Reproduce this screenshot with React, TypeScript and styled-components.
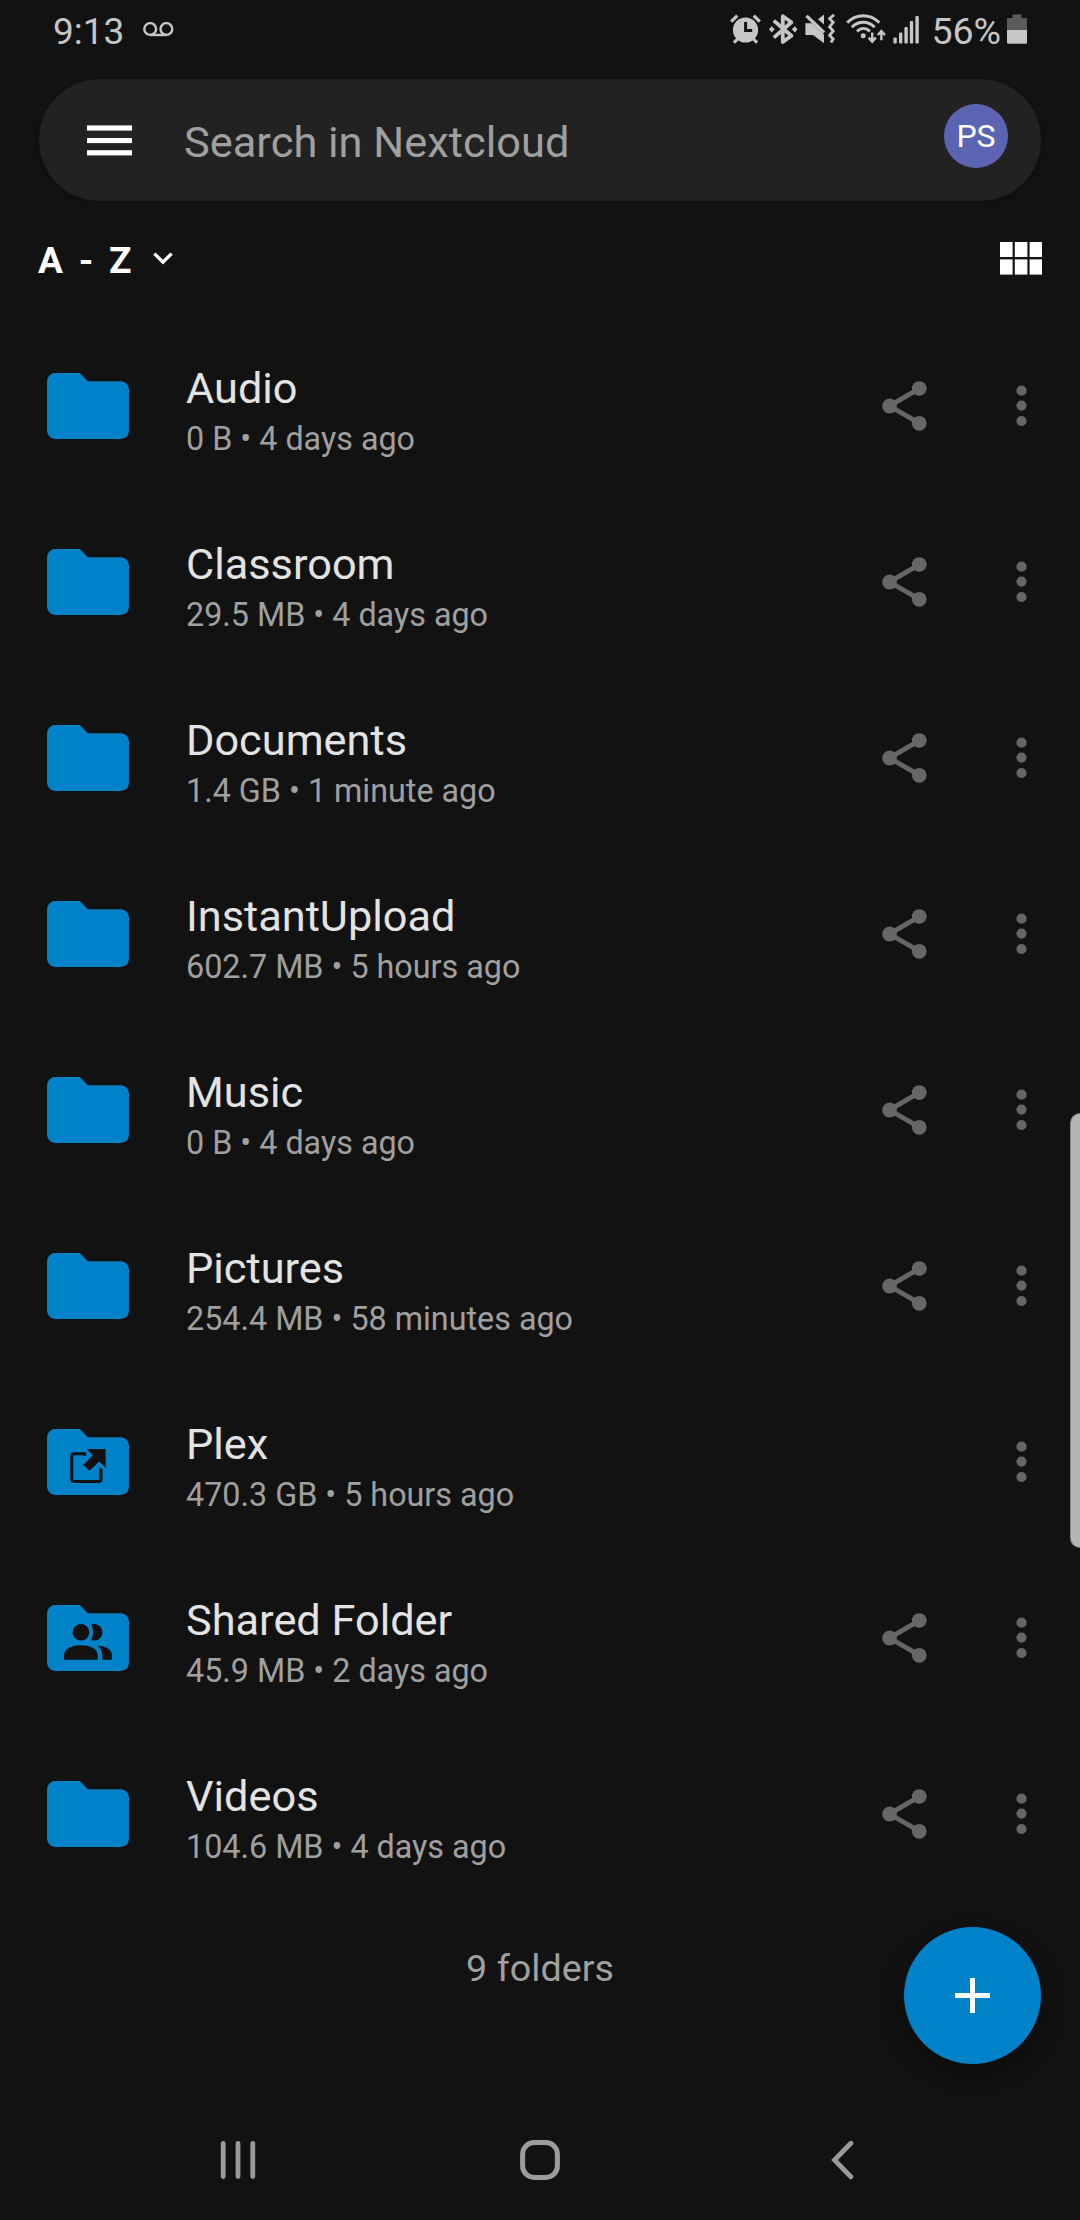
import React from "react";
import styled, { createGlobalStyle } from "styled-components";

const BG = "#121212";
const BLUE = "#0082c9";
const STATUS = "#c6c6c6";

const GlobalStyle = createGlobalStyle`
  * { box-sizing: border-box; }
  html, body { margin: 0; padding: 0; background: ${BG}; }
  svg { display: block; flex: none; }
  button { border: 0; padding: 0; background: none; font: inherit; color: inherit; }
`;

const Screen = styled.div`
  position: relative;
  display: flex;
  flex-direction: column;
  width: 1080px;
  height: 2220px;
  overflow: hidden;
  background: ${BG};
  font-family: Roboto, "Noto Sans", sans-serif;
`;

const StatusBar = styled.header`
  display: flex;
  justify-content: space-between;
  height: 79px;
  padding: 7px 53px 0 53px;
  color: ${STATUS};
  font-size: 37px;
  line-height: 49px;
`;

const StatusGroup = styled.div`
  display: flex;
  align-items: flex-start;
`;

const StatusIcon = styled.svg<{ $left?: number; $top: number }>`
  margin-left: ${(p) => p.$left ?? 0}px;
  margin-top: ${(p) => p.$top}px;
`;

const StatusText = styled.span<{ $left?: number; $size?: number }>`
  margin-left: ${(p) => p.$left ?? 0}px;
  font-size: ${(p) => p.$size ?? 37}px;
`;

const SearchBar = styled.div`
  display: flex;
  align-items: center;
  height: 122px;
  margin: 0 39px;
  padding: 0 33px 0 48px;
  border-radius: 61px;
  background: #222222;
  box-shadow: 0 2px 4px rgba(0, 0, 0, 0.15);
`;

const SearchText = styled.span`
  flex: 1;
  margin-left: 52px;
  padding-top: 5px;
  color: #a0a0a0;
  font-size: 43.4px;
  line-height: 50px;
`;

const Avatar = styled.div`
  display: flex;
  align-items: center;
  justify-content: center;
  width: 64px;
  height: 64px;
  margin-bottom: 8px;
  border-radius: 50%;
  background: #5b64b3;
  color: #fff;
  font-size: 32px;
  line-height: 64px;
`;

const SortBar = styled.div`
  display: flex;
  align-items: center;
  justify-content: space-between;
  height: 115px;
  margin-bottom: 2px;
  padding: 0 38px;
`;

const SortButton = styled.button`
  display: flex;
  align-items: center;
  gap: 18px;
  color: #fff;
`;

const SortLabel = styled.span`
  padding-top: 5px;
  font-size: 37px;
  font-weight: 700;
  line-height: 44px;
  letter-spacing: 3.3px;
`;

const FileList = styled.ul`
  margin: 0;
  padding: 0;
  list-style: none;
`;

const FileRow = styled.li`
  display: flex;
  align-items: center;
  height: 176px;
  padding: 0 53px 0 47px;
`;

const FileInfo = styled.div`
  display: flex;
  flex: 1;
  flex-direction: column;
  gap: 7px;
  margin-left: 57px;
  padding-top: 10px;
`;

const FileName = styled.span`
  color: #e3e3e3;
  font-size: 43.3px;
  line-height: 48px;
`;

const FileMeta = styled.span`
  color: #a0a0a0;
  font-size: 32.3px;
  line-height: 38px;
`;

const RowActions = styled.div`
  display: flex;
  align-items: center;
  gap: 88px;
`;

const Footer = styled.div`
  padding-top: 44px;
  color: #a0a0a0;
  font-size: 37.7px;
  line-height: 44px;
  text-align: center;
`;

const Fab = styled.button`
  position: absolute;
  right: 39px;
  bottom: 156px;
  display: flex;
  align-items: center;
  justify-content: center;
  width: 137px;
  height: 137px;
  border-radius: 50%;
  background: ${BLUE};
  box-shadow: 0 10px 22px rgba(0, 0, 0, 0.35);
`;

const EdgeHandle = styled.div`
  position: absolute;
  top: 1113px;
  right: 0;
  width: 10px;
  height: 435px;
  border: 1px solid #858585;
  border-right: 0;
  border-radius: 12px 0 0 12px;
  background: #b5b5b5;
`;

const NavBar = styled.nav`
  display: flex;
  align-items: center;
  justify-content: space-between;
  height: 120px;
  margin-top: auto;
  padding: 0 220px;
`;

type Kind = "plain" | "external" | "shared";

const files: { name: string; size: string; age: string; kind?: Kind; noShare?: boolean }[] = [
  { name: "Audio", size: "0 B", age: "4 days ago" },
  { name: "Classroom", size: "29.5 MB", age: "4 days ago" },
  { name: "Documents", size: "1.4 GB", age: "1 minute ago" },
  { name: "InstantUpload", size: "602.7 MB", age: "5 hours ago" },
  { name: "Music", size: "0 B", age: "4 days ago" },
  { name: "Pictures", size: "254.4 MB", age: "58 minutes ago" },
  { name: "Plex", size: "470.3 GB", age: "5 hours ago", kind: "external", noShare: true },
  { name: "Shared Folder", size: "45.9 MB", age: "2 days ago", kind: "shared" },
  { name: "Videos", size: "104.6 MB", age: "4 days ago" },
];

function FolderIcon({ kind = "plain" }: { kind?: Kind }) {
  return (
    <svg width="82" height="66" viewBox="0 0 82 66">
      <path
        fill={BLUE}
        d="M8.2 0H32.8L41 8.3H73.8A8.2 8.2 0 0 1 82 16.5V57.8A8.2 8.2 0 0 1 73.8 66H8.2A8.2 8.2 0 0 1 0 57.8V8.2A8.2 8.2 0 0 1 8.2 0Z"
      />
      {kind === "external" && (
        <>
          <path
            fill="none"
            stroke={BG}
            strokeWidth="3"
            d="M39 24.8H27.2A2.4 2.4 0 0 0 24.8 27.2V50.2A2.4 2.4 0 0 0 27.2 52.6H51.6A2.4 2.4 0 0 0 54 50.2V40"
          />
          <path fill={BG} d="M36 23.3L40.2 26.6H36ZM52.5 38L55.5 41V42H52.5Z" />
          <path fill={BG} d="M39.7 20H58.7V38.9L52.2 32.4L42.5 41.8L36.4 35.9L45.8 26.2Z" />
        </>
      )}
      {kind === "shared" && (
        <g fill={BG}>
          <circle cx="34" cy="27.3" r="8.3" />
          <path d="M44 19.6A8.3 8.3 0 1 1 44 35C46.8 30.4 46.8 24.2 44 19.6Z" />
          <path d="M17 54.7V50.5C17 43.6 25 40.3 34 40.3C43 40.3 50.7 43.6 50.7 50.5V54.7Z" />
          <path d="M50.6 40.6C59 41.3 65 44.6 65 50.5V54.7H55.2V50.5C55.2 46.2 53.4 43 50.6 40.6Z" />
        </g>
      )}
    </svg>
  );
}

function ShareIcon() {
  return (
    <svg width="46" height="50" viewBox="0 0 46 50">
      <path d="M37.3 7.6L7.5 25L37.3 42.2" fill="none" stroke="#666" strokeWidth="4.9" />
      <g fill="#666">
        <circle cx="37.3" cy="7.6" r="7.4" />
        <circle cx="7.6" cy="25" r="7.4" />
        <circle cx="37.3" cy="42.3" r="7.4" />
      </g>
    </svg>
  );
}

function MoreIcon() {
  return (
    <svg width="11" height="42" viewBox="0 0 11 42" fill="#666">
      <circle cx="5.5" cy="5.6" r="5.1" />
      <circle cx="5.5" cy="20.6" r="5.1" />
      <circle cx="5.5" cy="36" r="5.1" />
    </svg>
  );
}

function StatusIcons() {
  return (
    <>
      <StatusIcon $top={7} width="32" height="30" viewBox="730 14 32 30">
        <g stroke={STATUS} strokeWidth="3.2">
          <path d="M731.2 21.6L737.3 15.6M759.8 21.6L753.7 15.6" />
          <path d="M738 38.5L734 42.6M753 38.5L757 42.6" />
        </g>
        <circle cx="745.5" cy="30" r="12.6" fill={STATUS} />
        <path d="M745.6 22V30.6H752.2" fill="none" stroke={BG} strokeWidth="3" />
      </StatusIcon>
      <StatusIcon $left={7} $top={7} width="29" height="31" viewBox="769 14 29 31">
        <path
          d="M773.8 20.6L791.4 35.8L782.8 42V16.2L791.4 22.2L773.8 37.6"
          fill="none"
          stroke={STATUS}
          strokeWidth="3.8"
          strokeLinejoin="round"
        />
        <path d="M769 29.3L771.6 26.2L774.8 29.3L771.6 32.4ZM791.8 29.3L795 26.2L797.4 29.3L795 32.4Z" fill={STATUS} />
      </StatusIcon>
      <StatusIcon $left={6} $top={7} width="32" height="31" viewBox="804 14 32 31">
        <path d="M805.4 23.2H812L824 34.6V43.2L813 35H805.4Z" fill={STATUS} />
        <path d="M806.5 15.8L824 32.5" stroke={STATUS} strokeWidth="3.2" />
        <path d="M824 14.6V24.4L818 19.3Z" fill={STATUS} />
        <path
          d="M834 14.8L829.6 18.6L833.2 22.4L829.6 27L833.2 31L829.6 35.4L833.2 39L831 42.6"
          fill="none"
          stroke={STATUS}
          strokeWidth="2.8"
        />
      </StatusIcon>
      <StatusIcon $left={10} $top={7} width="40" height="31" viewBox="846 14 40 31">
        <g fill="none" stroke={STATUS} strokeWidth="2.9">
          <path d="M847.2 22.6C856.5 13.4 870 13.4 879.3 22.6" />
          <path d="M851.8 27.2C858.5 20.6 868 20.6 874.7 27.2" />
          <path d="M857 31.4C861 27.6 866 27.6 870 31.4" />
        </g>
        <circle cx="863.2" cy="35.8" r="2.5" fill={STATUS} />
        <path
          d="M872.2 32.4V40.6M868.6 37.6L872.2 41.6L875.8 37.6M881.4 40.2V32M877.8 35L881.4 31L885 35"
          fill="none"
          stroke={STATUS}
          strokeWidth="2.4"
        />
      </StatusIcon>
      <StatusIcon $left={7} $top={9} width="27" height="28" viewBox="893 16 27 28" fill={STATUS}>
        <rect x="893.4" y="37.6" width="3.4" height="6" rx="1" />
        <rect x="899" y="32.4" width="3.4" height="11.2" rx="1" />
        <rect x="904.4" y="27" width="3.4" height="16.6" rx="1" />
        <rect x="909.8" y="21" width="3.4" height="22.6" rx="1" />
        <rect x="915.4" y="16" width="3.4" height="27.6" rx="1" />
      </StatusIcon>
    </>
  );
}

export default function App() {
  return (
    <>
      <GlobalStyle />
      <Screen>
        <StatusBar>
          <StatusGroup>
            <StatusText>9:13</StatusText>
            <StatusIcon $left={19} $top={15} width="31" height="15" viewBox="0 0 31 15">
              <g fill="none" stroke={STATUS} strokeWidth="2.4">
                <circle cx="7.2" cy="7" r="5.9" />
                <circle cx="23.4" cy="7" r="5.9" />
                <path d="M7.2 13H23.4" />
              </g>
            </StatusIcon>
          </StatusGroup>
          <StatusGroup>
            <StatusIcons />
            <StatusText $left={11} $size={37.5}>
              56%
            </StatusText>
            <StatusIcon $left={6} $top={7} width="20" height="30" viewBox="0 0 20 30">
              <path d="M5.5 0.4H14.5V4H20V16H0V4H5.5Z" fill="#5c5c5c" />
              <path d="M0 16H20V28.5Q20 29.8 18.7 29.8H1.3Q0 29.8 0 28.5Z" fill={STATUS} />
            </StatusIcon>
          </StatusGroup>
        </StatusBar>

        <SearchBar>
          <svg width="45" height="31" viewBox="0 0 45 31" fill="#fff">
            <rect y="0.4" width="45" height="5.2" />
            <rect y="13" width="45" height="5.1" />
            <rect y="25.2" width="45" height="5.2" />
          </svg>
          <SearchText>Search in Nextcloud</SearchText>
          <Avatar>PS</Avatar>
        </SearchBar>

        <SortBar>
          <SortButton>
            <SortLabel>A - Z</SortLabel>
            <svg width="20" height="13" viewBox="0 0 20 13">
              <path d="M1.4 1.6L10 10.2L18.6 1.6" fill="none" stroke="#fff" strokeWidth="3.4" />
            </svg>
          </SortButton>
          <svg width="42" height="33" viewBox="0 0 42 33" fill="#fff">
            {[0, 14.8, 29.6].map((x) => (
              <React.Fragment key={x}>
                <rect x={x} y="0" width="12.6" height="15" />
                <rect x={x} y="17.4" width="12.6" height="15.2" />
              </React.Fragment>
            ))}
          </svg>
        </SortBar>

        <FileList>
          {files.map((f) => (
            <FileRow key={f.name}>
              <FolderIcon kind={f.kind} />
              <FileInfo>
                <FileName>{f.name}</FileName>
                <FileMeta>
                  {f.size} • {f.age}
                </FileMeta>
              </FileInfo>
              <RowActions>
                {!f.noShare && <ShareIcon />}
                <MoreIcon />
              </RowActions>
            </FileRow>
          ))}
        </FileList>

        <Footer>9 folders</Footer>

        <NavBar>
          <svg width="36" height="40" viewBox="0 0 36 40" stroke="#9b9b9b" strokeWidth="4.8" strokeLinecap="round">
            <path d="M3.2 3.4V36.6M18 3.4V36.6M32.8 3.4V36.6" />
          </svg>
          <svg width="40" height="40" viewBox="0 0 40 40">
            <rect x="2.6" y="2.6" width="34.8" height="34.8" rx="11.5" fill="none" stroke="#9b9b9b" strokeWidth="5" />
          </svg>
          <svg width="36" height="40" viewBox="-6.5 0 36 40">
            <path d="M20.4 3.2L4 20L20.4 36.8" fill="none" stroke="#9b9b9b" strokeWidth="4.8" strokeLinecap="round" />
          </svg>
        </NavBar>

        <Fab>
          <svg width="35" height="35" viewBox="0 0 35 35">
            <path d="M17.5 0V35M0 17.5H35" stroke="#fff" strokeWidth="5" />
          </svg>
        </Fab>
        <EdgeHandle />
      </Screen>
    </>
  );
}
